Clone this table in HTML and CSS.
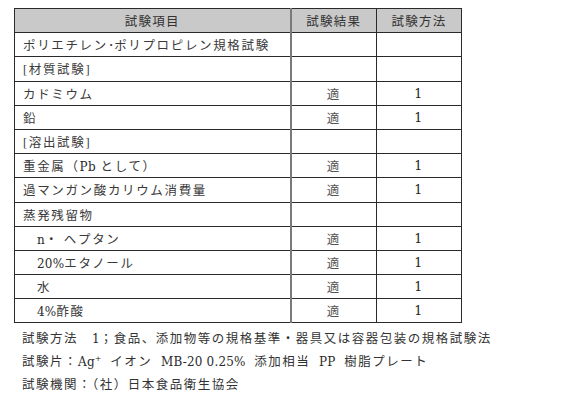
FILE: index.html
```html
<!DOCTYPE html>
<html lang="ja">
<head>
<meta charset="utf-8">
<link rel="stylesheet" href="styles.css">
</head>
<body>
<div class="page">
  <table class="spec">
    <colgroup>
      <col class="c-item">
      <col class="c-result">
      <col class="c-method">
    </colgroup>
    <thead>
      <tr><th class="item-h">試験項目</th><th>試験結果</th><th>試験方法</th></tr>
    </thead>
    <tbody>
      <tr><td class="item">ポリエチレン<span class="dot">･</span>ポリプロピレン規格試験</td><td></td><td></td></tr>
      <tr><td class="item">[材質試験]</td><td></td><td></td></tr>
      <tr><td class="item">カドミウム</td><td class="res">適</td><td class="num">1</td></tr>
      <tr><td class="item">鉛</td><td class="res">適</td><td class="num">1</td></tr>
      <tr><td class="item">[溶出試験]</td><td></td><td></td></tr>
      <tr><td class="item">重金属（<span class="lat">Pb</span> として）</td><td class="res">適</td><td class="num">1</td></tr>
      <tr><td class="item">過マンガン酸カリウム消費量</td><td class="res">適</td><td class="num">1</td></tr>
      <tr><td class="item">蒸発残留物</td><td></td><td></td></tr>
      <tr><td class="item sub"><span class="lat">n</span>・ ヘプタン</td><td class="res">適</td><td class="num">1</td></tr>
      <tr><td class="item sub"><span class="lat">20%</span>エタノール</td><td class="res">適</td><td class="num">1</td></tr>
      <tr><td class="item sub">水</td><td class="res">適</td><td class="num">1</td></tr>
      <tr><td class="item sub"><span class="lat">4%</span>酢酸</td><td class="res">適</td><td class="num">1</td></tr>
    </tbody>
  </table>
  <div class="notes">
    <p>試験方法　<span class="lat">1</span>；食品、添加物等の規格基準・器具又は容器包装の規格試験法</p>
    <p>試験片：<span class="lat">Ag<sup>+</sup></span> イオン <span class="lat tight">MB-20 0.25%</span> 添加相当 <span class="lat">PP</span> 樹脂プレート</p>
    <p>試験機関：（社）日本食品衛生協会</p>
  </div>
</div>
</body>
</html>
```
FILE: styles.css
```css
html, body {
  margin: 0;
  padding: 0;
  background: #ffffff;
}

body {
  font-family: "Liberation Serif", "Noto Sans CJK JP", serif;
  color: #3a3a3a;
}

.page {
  padding: 8px 0 0 14px;
}

.spec {
  border-collapse: collapse;
  table-layout: fixed;
  width: 447px;
  font-size: 12.5px;
  letter-spacing: 1.65px;
}

.c-item { width: 276px; }
.c-result { width: 86px; }
.c-method { width: 85px; }

.spec th,
.spec td {
  height: 24.2px;
  box-sizing: border-box;
  padding: 0 0 0 8px;
  border: 1px solid #2a2a2a;
  font-weight: normal;
  white-space: nowrap;
  vertical-align: middle;
}

.spec th {
  background: #c9c9c9;
  text-align: center;
  padding: 0;
  color: #333;
  letter-spacing: 1.2px;
}

.spec .item-h,
.spec .item {
  border-right: 2px solid #7a7a7a;
}

.spec tbody tr td {
  border-top-color: #555;
}

.spec .sub {
  padding-left: 22px;
}

.spec .res {
  text-align: center;
  padding: 0;
  color: #555;
}

.spec .num {
  text-align: center;
  padding: 0;
  font-family: "DejaVu Serif", serif;
  font-size: 12.5px;
  color: #222;
}

.dot {
  letter-spacing: 0;
}

.lat {
  font-family: "DejaVu Serif", serif;
  font-size: 12px;
  color: #2a2a2a;
  letter-spacing: 0.2px;
}

.notes {
  padding: 5px 0 0 8px;
  font-size: 12.5px;
  letter-spacing: 1.5px;
  word-spacing: 4px;
  color: #333;
}

.notes .tight {
  word-spacing: 0;
}

.notes p {
  margin: 0;
  line-height: 23px;
}

.notes sup {
  font-size: 8px;
  vertical-align: 5px;
  line-height: 0;
}
```
